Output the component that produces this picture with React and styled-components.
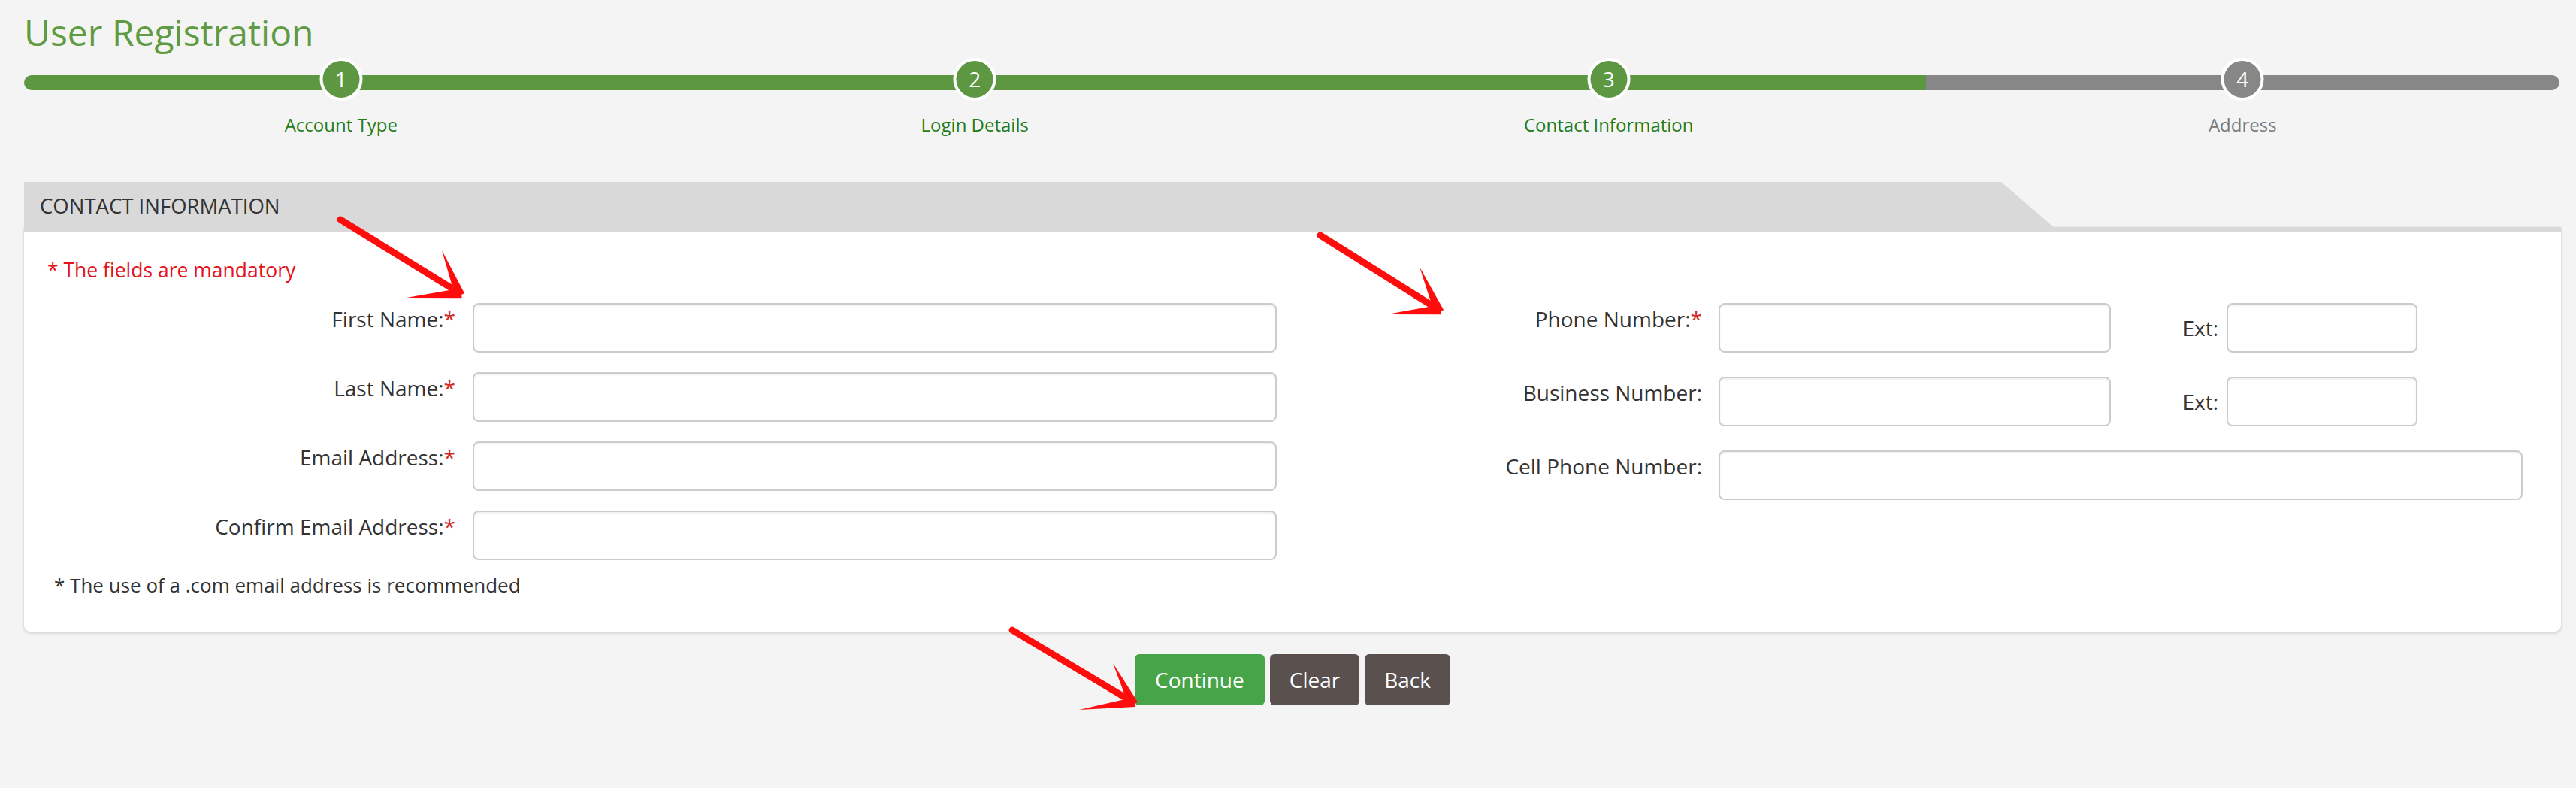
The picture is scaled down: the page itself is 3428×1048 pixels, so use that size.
import React from "react";
import styled, { createGlobalStyle } from "styled-components";

const GREEN = "#5d9741";
const GRAY = "#878787";

const GlobalStyle = createGlobalStyle`
  * { box-sizing: border-box; }
  body {
    margin: 0;
    background: #f4f4f4;
    font-family: "Open Sans", "Liberation Sans", sans-serif;
    color: #333;
  }
`;

const Root = styled.div`
  position: relative;
  width: 3428px;
  min-height: 1048px;
`;

const Page = styled.div`
  width: 3408px;
  padding: 10px 0 0 32px;
`;

const Title = styled.h1`
  margin: 0;
  font-size: 48px;
  font-weight: 400;
  line-height: 66px;
  color: #5f9b42;
`;

const Steps = styled.div`
  display: grid;
  grid-template-columns: repeat(4, 1fr);
  width: 3374px;
  margin-top: 1px;
`;

const Step = styled.div`
  position: relative;
  display: flex;
  flex-direction: column;
  align-items: center;
`;

const Track = styled.div`
  align-self: stretch;
  height: 20px;
  margin-top: 23px;
  background: ${(p) => (p.$done ? GREEN : GRAY)};
  border-radius: ${(p) =>
    p.$first ? "10px 0 0 10px" : p.$last ? "0 10px 10px 0" : "0"};
`;

const Circle = styled.div`
  position: absolute;
  top: 0;
  left: 50%;
  transform: translateX(-50%);
  width: 57px;
  height: 57px;
  border-radius: 50%;
  border: 4px solid #fff;
  background: ${(p) => (p.$done ? GREEN : GRAY)};
  color: #fff;
  font-size: 28px;
  line-height: 49px;
  text-align: center;
`;

const StepLabel = styled.div`
  margin-top: 29px;
  font-size: 24px;
  line-height: 34px;
  color: ${(p) => (p.$done ? "#1f7d1a" : "#7a7a7a")};
`;

const Tab = styled.div`
  width: 2701px;
  height: 60px;
  margin-top: 59px;
  padding: 3px 0 0 21px;
  display: flex;
  align-items: center;
  background: #d9d9d9;
  clip-path: polygon(0 0, 2631px 0, 100% 100%, 0 100%);
  font-size: 27.5px;
  line-height: 40px;
  color: #333;
  text-transform: uppercase;
`;

const Panel = styled.div`
  width: 3376px;
  background: #fff;
  border-top: 6px solid #d9d9d9;
  border-radius: 0 0 8px 8px;
  box-shadow: 0 2px 4px rgba(0, 0, 0, 0.16), 0 0 2px rgba(0, 0, 0, 0.06);
  padding: 31px 0 43px;
`;

const Mandatory = styled.div`
  padding-left: 31px;
  font-size: 26.5px;
  line-height: 40px;
  color: #e3141b;
`;

const Columns = styled.div`
  display: flex;
  margin-top: 24px;
`;

const Column = styled.div`
  flex: ${(p) => (p.$width ? `0 0 ${p.$width}px` : "1")};
`;

const FieldList = styled.div`
  display: flex;
  flex-direction: column;
  gap: ${(p) => p.$gap}px;
`;

const FieldRow = styled.div`
  display: flex;
  align-items: flex-start;
`;

const Label = styled.label`
  flex: 0 0 ${(p) => p.$width}px;
  padding-top: 1px;
  text-align: right;
  font-size: 28px;
  line-height: 40px;
  color: #333;
  white-space: nowrap;
`;

const Req = styled.span`
  color: #cf2a27;
`;

const Input = styled.input`
  width: ${(p) => p.$width}px;
  height: 66px;
  margin-left: ${(p) => p.$gap ?? 0}px;
  border: 2px solid #cccccc;
  border-radius: 8px;
  background: #fff;
  box-shadow: inset 0 2px 2px rgba(0, 0, 0, 0.06);
  font-family: inherit;
  font-size: 28px;
  padding: 0 12px;
  outline: none;
`;

const ExtGroup = styled.div`
  display: flex;
  align-items: center;
  height: 66px;
`;

const ExtLabel = styled.label`
  width: 143px;
  margin-right: 11px;
  text-align: right;
  font-size: 28px;
  line-height: 40px;
  color: #333;
`;

const Note = styled.div`
  margin-top: 15px;
  padding-left: 40px;
  font-size: 26px;
  line-height: 37px;
  color: #333;
`;

const ButtonBar = styled.div`
  width: 3376px;
  display: flex;
  justify-content: center;
  gap: 7px;
  margin-top: 30px;
`;

const Button = styled.button`
  height: 68px;
  padding: 0 ${(p) => (p.$primary ? 27 : 26)}px;
  border: none;
  border-radius: 6px;
  background: ${(p) => (p.$primary ? "#48a449" : "#5a514e")};
  color: #fff;
  font-family: inherit;
  font-size: 28px;
  line-height: 40px;
  cursor: pointer;
`;

const Overlay = styled.svg`
  position: absolute;
  top: 0;
  left: 0;
  pointer-events: none;
`;

const steps = [
  { n: 1, label: "Account Type", done: true },
  { n: 2, label: "Login Details", done: true },
  { n: 3, label: "Contact Information", done: true },
  { n: 4, label: "Address", done: false },
];

const leftFields = ["First Name", "Last Name", "Email Address", "Confirm Email Address"];

function barb(t, e, w) {
  const dx = e[0] - t[0];
  const dy = e[1] - t[1];
  const len = Math.hypot(dx, dy);
  const nx = (-dy / len) * (w / 2);
  const ny = (dx / len) * (w / 2);
  const bx = (-dx / len) * 3;
  const by = (-dy / len) * 3;
  return [
    [t[0] + nx + bx, t[1] + ny + by],
    [e[0], e[1]],
    [t[0] - nx + bx, t[1] - ny + by],
  ]
    .map((p) => p.join(","))
    .join(" ");
}

function Arrow({ tail, tip, b1, b2 }) {
  return (
    <g fill="#ff0d0d" stroke="none">
      <line
        x1={tail[0]}
        y1={tail[1]}
        x2={tip[0] - 4}
        y2={tip[1] - 3}
        stroke="#ff0d0d"
        strokeWidth="9"
        strokeLinecap="round"
      />
      <polygon points={barb(tip, b1, 13)} />
      <polygon points={barb(tip, b2, 13)} />
    </g>
  );
}

export default function App() {
  return (
    <Root>
      <GlobalStyle />
      <Page>
        <Title>User Registration</Title>
        <Steps>
          {steps.map((s, i) => (
            <Step key={s.n}>
              <Track $done={s.done} $first={i === 0} $last={i === steps.length - 1} />
              <Circle $done={s.done}>{s.n}</Circle>
              <StepLabel $done={s.done}>{s.label}</StepLabel>
            </Step>
          ))}
        </Steps>

        <Tab>Contact Information</Tab>
        <Panel>
          <Mandatory>* The fields are mandatory</Mandatory>
          <Columns>
            <Column $width={1688}>
              <FieldList $gap={26}>
                {leftFields.map((f) => (
                  <FieldRow key={f}>
                    <Label $width={574}>
                      {f}:<Req>*</Req>
                    </Label>
                    <Input $width={1070} $gap={23} />
                  </FieldRow>
                ))}
              </FieldList>
              <Note>* The use of a .com email address is recommended</Note>
            </Column>
            <Column>
              <FieldList $gap={32}>
                <FieldRow>
                  <Label $width={545}>
                    Phone Number:<Req>*</Req>
                  </Label>
                  <Input $width={522} $gap={22} />
                  <ExtGroup>
                    <ExtLabel>Ext:</ExtLabel>
                    <Input $width={254} />
                  </ExtGroup>
                </FieldRow>
                <FieldRow>
                  <Label $width={545}>Business Number:</Label>
                  <Input $width={522} $gap={22} />
                  <ExtGroup>
                    <ExtLabel>Ext:</ExtLabel>
                    <Input $width={254} />
                  </ExtGroup>
                </FieldRow>
                <FieldRow>
                  <Label $width={545}>Cell Phone Number:</Label>
                  <Input $width={1070} $gap={22} />
                </FieldRow>
              </FieldList>
            </Column>
          </Columns>
        </Panel>

        <ButtonBar>
          <Button $primary>Continue</Button>
          <Button>Clear</Button>
          <Button>Back</Button>
        </ButtonBar>
      </Page>

      <Overlay width="3428" height="1048" viewBox="0 0 3428 1048">
        <Arrow tail={[453, 292]} tip={[611, 390]} b1={[588, 333]} b2={[541, 396]} />
        <Arrow tail={[1757, 313]} tip={[1914, 412]} b1={[1889, 355]} b2={[1846, 418]} />
        <Arrow tail={[1347, 838]} tip={[1507, 934]} b1={[1481, 882]} b2={[1436, 944]} />
      </Overlay>
    </Root>
  );
}
